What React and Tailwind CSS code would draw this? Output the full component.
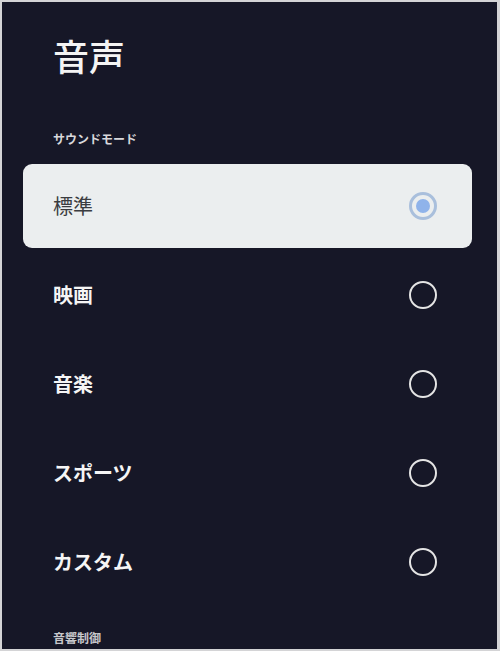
import React from "react";

const font = { fontFamily: '"Noto Sans CJK JP", "Noto Sans", sans-serif' };

function Radio({ selected }) {
  if (selected) {
    return (
      <div className="w-[28px] h-[28px] rounded-full border-[3px] border-[#a9bfdc] flex items-center justify-center">
        <div className="w-[14px] h-[14px] rounded-full bg-[#8fb3ea]" />
      </div>
    );
  }
  return <div className="w-[28px] h-[28px] rounded-full border-[2.5px] border-[#e4e4e4]" />;
}

const items = ["標準", "映画", "音楽", "スポーツ", "カスタム"];

export default function App() {
  return (
    <div
      className="w-[500px] h-[651px] bg-[#d4d4d6] p-[2px] pr-[3px] overflow-hidden"
      style={font}
    >
      <div className="w-full h-full bg-[#161727] flex flex-col pl-[21px] pr-[25px] overflow-hidden">
        <h1 className="mt-[30px] ml-[30px] text-[36px] leading-[46px] font-medium text-[#f4f4f4]">音声</h1>
        <div className="mt-[53px] ml-[30px] text-[12px] leading-[16px] font-bold text-[#d8d8dc]">サウンドモード</div>
        <div className="mt-[17px] flex flex-col gap-[5px]">
          {items.map((label, i) => (
            <div
              key={label}
              className={
                "h-[84px] rounded-[9px] flex items-center justify-between pl-[30px] pr-[35px] " +
                (i === 0 ? "bg-[#ebeeef]" : "")
              }
            >
              <span
                className={
                  "text-[20px] leading-[28px] " +
                  (i === 0 ? "text-[#3a3c40] font-normal" : "text-[#f5f5f5] font-bold")
                }
              >
                {label}
              </span>
              <Radio selected={i === 0} />
            </div>
          ))}
        </div>
        <div className="mt-[26px] ml-[30px] text-[12px] leading-[16px] font-bold text-[#c8c8cc]">音響制御</div>
      </div>
    </div>
  );
}
